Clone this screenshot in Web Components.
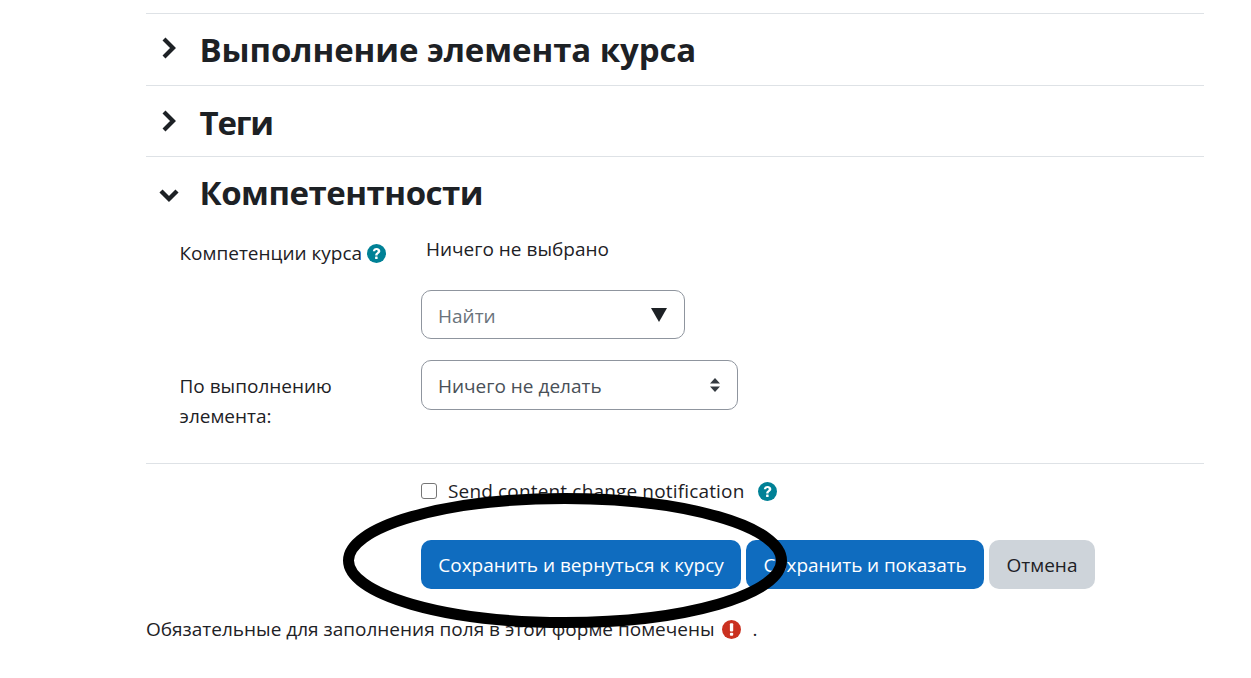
<!DOCTYPE html>
<html lang="ru"><head><meta charset="utf-8"><title>Форма</title>
<style>
html,body{margin:0;padding:0;background:#fff}
body{font-family:"Open Sans","Noto Sans","Liberation Sans",sans-serif;font-size:19px;color:#1d2125;height:678px;overflow:hidden}
</style></head><body>
<form-page></form-page>
<template id="t-sec"><style>
:host{display:block;border-top:1px solid #dee2e6;box-sizing:border-box}
.h{display:flex;align-items:center;height:var(--h,71px)}
.ic{width:53.500px;display:block;box-sizing:border-box}
h3{margin:0;padding-top:var(--pt,1px);font:700 33px/1.2 "Open Sans","Noto Sans",sans-serif;color:#1d2125;letter-spacing:var(--ls,-.1px)}
</style><div class="h"><span class="ic"></span><h3></h3></div><slot></slot></template>
<script>
class FormSection extends HTMLElement{constructor(){super();const s=this.attachShadow({mode:'open'});s.appendChild(document.getElementById('t-sec').content.cloneNode(true));
 const open=this.hasAttribute('open');
 s.querySelector('h3').textContent=this.getAttribute('heading');
 const m=this.getAttribute('chev')||0;
 s.querySelector('.ic').innerHTML=open?`<svg width="24" height="24" viewBox="0 0 24 24" style="display:block;margin-left:11px;margin-top:${m}px"><path d="M4 6l8 8 8-8" fill="none" stroke="#1d2125" stroke-width="4.400"/></svg>`:`<svg width="20" height="24" viewBox="0 0 20 24" style="display:block;margin-left:14px;margin-top:${m}px"><path d="M4 3l9 9-9 9" fill="none" stroke="#1d2125" stroke-width="4.200"/></svg>`;
}}
customElements.define('form-section',FormSection);
class HelpIcon extends HTMLElement{constructor(){super();const c=this.getAttribute('color')||'#008196';const k=this.getAttribute('kind')||'q';
 this.attachShadow({mode:'open'}).innerHTML=`<style>:host{display:inline-block;width:19px;height:19px;vertical-align:middle}svg{display:block}</style><svg width="19" height="19" viewBox="0 0 19 19"><circle cx="9.500" cy="9.500" r="9.500" fill="${c}"/>${k=='q'?'<path d="M5.800 7.300c.2-2.200 1.700-3.400 3.800-3.400 2.100 0 3.700 1.300 3.700 3.100 0 2.700-2.800 2.500-2.800 4.600H8.200c0-3.200 2.500-2.900 2.500-4.400 0-.7-.5-1.200-1.200-1.200-.8 0-1.200.5-1.300 1.300z" fill="#fff"/><rect x="8.100" y="12.500" width="2.500" height="2.600" rx=".5" fill="#fff"/>':'<rect x="7.900" y="3.300" width="3.300" height="8.300" rx="1" fill="#fff"/><rect x="7.900" y="12.800" width="3.300" height="3" rx="1" fill="#fff"/>'}</svg>`;}}
customElements.define('help-icon',HelpIcon);
class FormButton extends HTMLElement{constructor(){super();this.attachShadow({mode:'open'}).innerHTML=`<style>:host{display:inline-flex;align-items:center;justify-content:center;height:49px;padding-top:1px;border-radius:10px;background:#0f6cbf;color:#fff;font-size:19px;box-sizing:border-box;white-space:nowrap}:host([secondary]){background:#ced4da;color:#1d2125}</style><slot></slot>`;}}
customElements.define('form-button',FormButton);
class FieldBox extends HTMLElement{constructor(){super();const k=this.getAttribute('kind');this.attachShadow({mode:'open'}).innerHTML=`<style>:host{display:flex;align-items:center;justify-content:space-between;box-sizing:border-box;border:1px solid #8f959e;border-radius:10px;background:#fff;color:#495057;padding:0 16px;height:49px}:host([kind=tri]){color:#6a737b}.r{display:block}.t{display:block;padding-top:3px}</style><span class="t"><slot></slot></span>${k=='tri'?'<svg class="r" width="16" height="14" viewBox="0 0 16 14" style="margin-right:1px"><path d="M0 0h16L8 14z" fill="#1d2125"/></svg>':'<svg class="r" width="12" height="14" viewBox="0 0 12 14"><path d="M6 0l5 5.500H1zM6 14L1 8.500h10z" fill="#343a40"/></svg>'}`;}}
customElements.define('field-box',FieldBox);
class FormPage extends HTMLElement{constructor(){super();this.attachShadow({mode:'open'}).innerHTML=`<style>
:host{display:block;width:1058px;margin-left:146px;padding-top:13px;position:relative;font-size:19px;line-height:27px}
.row{display:grid;grid-template-columns:275px 1fr}
.lab{padding-left:33.500px}
.comp{padding-top:8px;height:235px;box-sizing:border-box}
.g1{height:124px}
.val{padding-left:5px;height:54px}
.rule{border-top:1px solid #dee2e6;height:0}
.chk{display:flex;align-items:center;padding-left:275px;height:54px}
.chk span:nth-child(2){letter-spacing:.16px}
.box{width:16px;height:16px;border:1px solid #767676;border-radius:3px;box-sizing:border-box;margin-right:11px;background:#fff}
.btns{display:flex;gap:5px;padding-left:275px;height:49px;margin-top:22px}
.btns form-button:first-child{width:320px}.btns form-button:nth-child(2){width:238px;letter-spacing:-.1px}.btns form-button:nth-child(3){width:106px}
.foot{margin-top:27px;white-space:nowrap;display:flex;align-items:center;height:27px}
.ell{position:absolute;left:189px;top:484px;pointer-events:none}
</style>
<form-section heading="Выполнение элемента курса" chev="-3" style="--h:71px;--ls:-.1px"></form-section>
<form-section heading="Теги" chev="0" style="--h:70px;--pt:3px;--ls:-1.2px"></form-section>
<form-section open heading="Компетентности" chev="8" style="--ls:-.5px">
<div class="comp">
<div class="row g1"><div class="lab" style="padding-top:4px;white-space:nowrap">Компетенции курса<help-icon style="margin-left:5px;margin-top:-3px"></help-icon></div><div><div class="val">Ничего не выбрано</div><field-box kind="tri" style="width:264px">Найти</field-box></div></div>
<div class="row"><div class="lab" style="line-height:30px;padding-top:11px">По выполнению<br>элемента:</div><div><field-box kind="sel" style="width:317px;height:50px">Ничего не делать</field-box></div></div>
</div></form-section>
<div class="rule"></div>
<div class="chk"><span class="box"></span><span>Send content change notification</span><help-icon style="margin-left:14px"></help-icon></div>
<div class="btns"><form-button>Сохранить и вернуться к курсу</form-button><form-button>Сохранить и показать</form-button><form-button secondary>Отмена</form-button></div>
<div class="foot"><span>Обязательные для заполнения поля в этой форме помечены</span><help-icon color="#ca3120" kind="e" style="margin-left:7px"></help-icon><span style="margin-left:12px">.</span></div>
<svg class="ell" width="460" height="160" viewBox="0 0 460 160"><ellipse cx="230" cy="76.500" rx="216.500" ry="62" fill="none" stroke="#000" stroke-width="11"/></svg>`;
}}
customElements.define('form-page',FormPage);
</script></body></html>
